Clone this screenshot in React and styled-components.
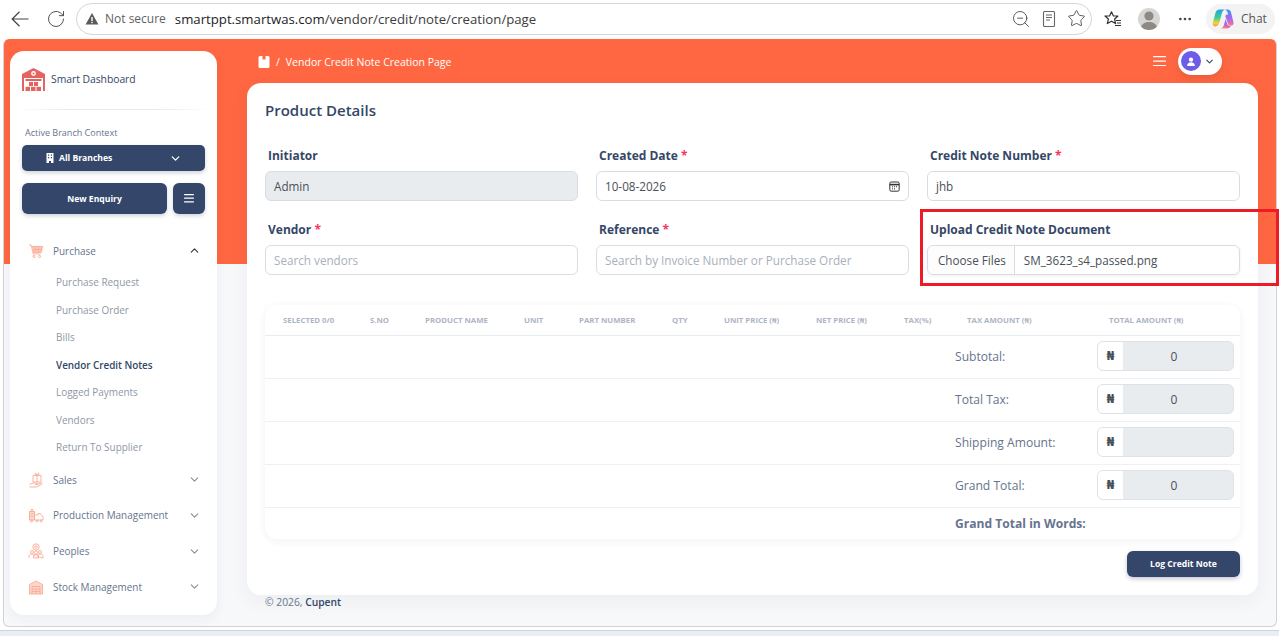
import React from 'react';
import styled, { createGlobalStyle } from 'styled-components';
import { RotateCw, ZoomOut, Star, MoreHorizontal, ChevronDown, ChevronUp } from 'lucide-react';

const Global = createGlobalStyle`
  html, body { margin: 0; padding: 0; background: #fff; }
  * { box-sizing: border-box; }
  body { font-family: "Open Sans", "Noto Sans", sans-serif; }
`;

const Root = styled.div`
  width: 1279px; height: 636px; overflow: hidden; background: #fff;
  display: flex; flex-direction: column;
`;
const Toolbar = styled.header`
  height: 39px; flex: none; background: #fff; display: flex; align-items: center; padding: 0 0 2px 11px; color: #444;
`;
const ToolBtn = styled.span`
  display: inline-flex; align-items: center; justify-content: center; flex: none; color: #444; margin-left: ${p => p.$ml || 0}px;
`;
const Address = styled.div`
  width: 1016px; height: 32px; margin: 0 0 0 10px; border: 1px solid #d5d5d5; border-radius: 16px;
  display: flex; align-items: center; padding: 0 5px 0 8px; background: #fff;
`;
const NotSecure = styled.span`
  font-size: 12px; font-weight: 500; color: #5f5f5f; margin: 0 9px 0 6px; white-space: nowrap;
`;
const Url = styled.span`
  font-size: 13.2px; color: #3c3c3c; flex: 1; white-space: nowrap;
  b { font-weight: 400; color: #1d1d1d; }
`;
const Avatar = styled.span`
  width: 22px; height: 22px; border-radius: 50%; background: #d8d6d3; margin-left: 16px; flex: none;
  display: inline-flex; align-items: center; justify-content: center; overflow: hidden;
`;
const ChatPill = styled.span`
  margin-left: 13px; width: 69px; height: 30px; background: #f3f3f3; border-radius: 15px; flex: none;
  display: inline-flex; align-items: center; padding-left: 6px; gap: 7px; font-size: 12px; color: #555;
`;

const Window = styled.div`
  height: 588px; flex: none; margin: 0 2px 0 3px; display: flex; align-items: flex-start;
  border: 1px solid #d3d3d3; border-top: 0; border-radius: 6px;
  background: linear-gradient(#ff6742 0, #ff6742 225px, #f7f8fa 225px);
  padding: 12px 0 0 6px;
`;
const StatusStrip = styled.div`
  flex: 1; margin-top: 3px; border-top: 1px solid #cfd3d8; background: #e9eef5;
`;

const Sidebar = styled.aside`
  width: 207px; height: 564px; flex: none; background: #fff; border-radius: 14px; padding: 17px 12px 0;
  box-shadow: 0 4px 12px rgba(20,30,60,.05);
`;
const Brand = styled.div`
  display: flex; align-items: center; gap: 6px; height: 23px; color: #344767; font-size: 10.4px; font-weight: 500;
  span { margin-top: -2px; letter-spacing: -.05px; }
`;
const Divider = styled.div`
  height: 1px; margin: 18px -6px 0; background: linear-gradient(90deg, transparent, #e6e8ec 30%, #e6e8ec 70%, transparent);
`;
const Context = styled.div`
  margin: 18px 0 0 3px; font-size: 9px; line-height: 10px; font-weight: 500; color: #67748e;
`;
const BranchSelect = styled.div`
  margin-top: 7px; height: 26px; border-radius: 5px; background: #34466a; color: #fff; font-size: 8.6px; font-weight: 700;
  display: flex; align-items: center; padding: 0 23px 0 24px; box-shadow: 0 2px 4px rgba(30,40,70,.2);
  span { margin-left: 5px; flex: 1; }
`;
const ActionRow = styled.div`
  margin-top: 12px; display: flex; gap: 6px;
`;
const DarkBtn = styled.button`
  height: 31px; width: ${p => p.$w}px; flex: none; border: 0; border-radius: 6px; background: #34466a; color: #fff;
  font: 700 8.6px "Open Sans", sans-serif; display: flex; align-items: center; justify-content: center; padding: 0;
  box-shadow: 0 2px 4px rgba(30,40,70,.2);
`;
const Nav = styled.nav`
  margin-top: 19px;
`;
const NavItem = styled.div`
  height: 35.6px; display: flex; align-items: center; padding: 0 4px 0 6px; color: #67748e; font-size: 9.95px;
  span { margin-left: 9px; flex: 1; white-space: nowrap; }
  & > svg:first-child { color: #f8ab95; flex: none; }
  & > svg:last-child { color: ${p => p.$open ? '#333' : '#8a8f99'}; flex: none; }
`;
const SubList = styled.div`
  margin-bottom: 1px;
`;
const SubItem = styled.div`
  height: 27.5px; display: flex; align-items: center; padding-left: 34px; font-size: 9.95px; white-space: nowrap;
  color: ${p => p.$active ? '#344767' : '#8f97a6'}; font-weight: ${p => p.$active ? 600 : 400};
  letter-spacing: ${p => p.$active ? '-.05px' : 0};
`;

const MainCol = styled.main`
  width: 1011px; margin-left: 30px; flex: none; margin-top: -12px;
`;
const TopBar = styled.div`
  height: 44px; display: flex; align-items: center; padding: 0 36px 0 11px; color: #fff; font-size: 10.5px;
`;
const Crumb = styled.div`
  flex: 1; display: flex; align-items: center; gap: 6px; padding-top: 1px; font-size: 10.5px; font-weight: 500;
`;
const UserPill = styled.div`
  margin-left: 12px; width: 44px; height: 27px; background: #fff; border-radius: 14px; display: flex; align-items: center; padding-left: 3px; gap: 3px; color: #344767;
  box-shadow: 0 3px 8px rgba(0,0,0,.1);
`;
const UserDot = styled.span`
  width: 20px; height: 20px; border-radius: 50%; background: #6c5ce7; display: inline-flex; align-items: center; justify-content: center;
`;
const Card = styled.section`
  height: 512px; background: #fff; border-radius: 14px; padding: 15px 18px 0;
  box-shadow: 0 6px 20px rgba(20,30,60,.05);
`;
const Title = styled.h2`
  margin: 0; font-size: 15px; line-height: 24px; font-weight: 600; color: #344767;
`;
const FormGrid = styled.div`
  margin-top: 26px; display: grid; grid-template-columns: repeat(3, 313px); column-gap: 18px; row-gap: 21px;
`;
const Field = styled.div`
  position: relative;
`;
const Label = styled.label`
  display: block; padding-left: 3px; font-size: 12px; line-height: 16px; font-weight: 700; color: #344767; margin-bottom: 7px;
  em { color: #f5365c; font-style: normal; }
`;
const Input = styled.div`
  height: 30px; border: 1px solid #d9dde3; border-radius: 6px; display: flex; align-items: center; padding: 0 8px;
  font-size: 11.7px; background: ${p => p.$disabled ? '#e9ecef' : '#fff'};
  color: ${p => p.$placeholder ? '#a9b0bb' : '#495057'};
  justify-content: space-between;
`;
const FileInput = styled.div`
  height: 30px; border: 1px solid #d9dde3; border-radius: 6px; display: flex; align-items: center; font-size: 11.7px; color: #495057;
  box-shadow: 0 1px 3px rgba(30,40,70,.08);
`;
const FileBtn = styled.span`
  height: 100%; padding: 0 8px 0 10px; display: flex; align-items: center; background: #fdfdfe; border-right: 1px solid #d9dde3; border-radius: 6px 0 0 6px;
`;
const FileName = styled.span`
  padding-left: 9px;
`;
const Highlight = styled.div`
  position: absolute; left: -7px; top: -13px; width: 359px; height: 77px; border: 3px solid #ed1c24; pointer-events: none;
`;
const Table = styled.div`
  margin-top: 30px; height: 234px; border-radius: 12px; background: #fff;
  box-shadow: 0 2px 10px rgba(20,30,60,.06);
`;
const HeadRow = styled.div`
  height: 31px; display: grid; grid-template-columns: 87px 55px 99px 55px 93px 52px 92px 88px 63px 142px 1fr;
  padding-left: 18px; align-items: center; border-bottom: 1px solid #e9ecef; color: #aeb5c4; font-size: 7.8px; font-weight: 700; white-space: nowrap;
`;
const TotalRow = styled.div`
  height: ${p => p.$h || 43}px; display: flex; align-items: center; padding: 0 0 ${p => p.$last ? 0 : 2}px 690px; color: #67748e; font-size: 12.1px;
  border-bottom: ${p => p.$last ? 0 : '1px solid #eef0f3'}; font-weight: ${p => p.$bold ? 700 : 400};
  span:first-child { width: 142px; }
`;
const Money = styled.div`
  width: 137px; height: 30px; border: 1px solid #dfe2e7; border-radius: 6px; display: flex; overflow: hidden; font-size: 12px; color: #495057; background: #e9ecef;
`;
const Currency = styled.div`
  width: 25px; background: #fff; display: flex; align-items: center; justify-content: center; font-family: "DejaVu Sans", sans-serif; font-size: 11.5px; font-weight: 700; color: #495057;
`;
const MoneyValue = styled.div`
  flex: 1; display: flex; align-items: center; justify-content: center; padding-right: 8px;
`;
const Actions = styled.div`
  margin-top: 12px; display: flex; justify-content: flex-end;
`;
const Submit = styled.button`
  width: 113px; height: 26px; border: 0; border-radius: 6px; background: #34466a; color: #fff; font: 700 8.6px "Open Sans", sans-serif; padding: 0;
  box-shadow: 0 2px 4px rgba(30,40,70,.25);
`;
const Footer = styled.div`
  height: 20px; padding-left: 18px; line-height: 14px; font-size: 10.3px; color: #67748e;
  b { color: #344767; font-weight: 600; }
`;

const Back = () => (
  <svg width="18" height="18" viewBox="0 0 18 18" fill="none" stroke="#444" strokeWidth="1.2"><path d="M17.5 9H1.2M8.5 1.8 1.2 9l7.3 7.2"/></svg>
);
const Warn = () => (
  <svg width="14" height="14" viewBox="0 0 14 14"><path d="M7 1 13.4 12.6H.6Z" fill="#5a5a5a"/><rect x="6.3" y="5" width="1.4" height="4" fill="#fff"/><rect x="6.3" y="9.8" width="1.4" height="1.4" fill="#fff"/></svg>
);
const Reader = () => (
  <svg width="16" height="18" viewBox="0 0 16 18" fill="none" stroke="#666" strokeWidth="1.1"><rect x="2.5" y="1.5" width="11" height="15" rx="1"/><path d="M5 5h6M5 7.5h6M5 10h4"/></svg>
);
const Favs = () => (
  <svg width="18" height="18" viewBox="0 0 18 18" fill="none" stroke="#333" strokeWidth="1.2"><path d="M7.5 1.8 9.4 6H14l-3.4 3 1 4.6-4.1-2.4-4.2 2.4 1.1-4.6L1 6h4.6Z" strokeLinejoin="round"/><path d="M12 10.5h5M13 13h4M11 15.5h6" /></svg>
);
const Person = ({ size = 22, color = '#8d8a85' }) => (
  <svg width={size} height={size} viewBox="0 0 22 22" fill={color}><circle cx="11" cy="8" r="4.6"/><path d="M2.5 22c0-5.5 3.8-8 8.5-8s8.5 2.5 8.5 8Z"/></svg>
);
const Copilot = () => (
  <svg width="22" height="22" viewBox="0 0 22 22">
    <defs>
      <linearGradient id="cpa" x1=".4" y1="0" x2=".4" y2="1"><stop offset="0" stopColor="#1fa4f0"/><stop offset=".5" stopColor="#3fd08a"/><stop offset=".8" stopColor="#f7d23e"/><stop offset="1" stopColor="#f6913c"/></linearGradient>
      <linearGradient id="cpb" x1=".6" y1="0" x2=".4" y2="1"><stop offset="0" stopColor="#2f9af2"/><stop offset=".5" stopColor="#9a6cf5"/><stop offset=".85" stopColor="#f26aa8"/><stop offset="1" stopColor="#f7a04a"/></linearGradient>
    </defs>
    <path d="M7.500 1.500h5.500c-1.800.6-2.700 2-3.200 4L7.500 14c-.6 2.600-2.200 4.400-4.300 4.400C1.300 18.400.3 16.800.8 14.800L3.500 4.800C4 2.800 5.400 1.500 7.500 1.500Z" fill="url(#cpa)"/>
    <path d="M13 1.500h2.500c1.800 0 3 1 3.500 2.800l2.400 9.700c.5 2.200-.6 3.800-2.600 3.800-1.600 0-2.500-.8-3-2.500L13.500 9c-.3-1.300.4-2.300 1.700-2.500l1-.1c-.4-2.200-1.400-4.100-3.200-4.900Z" fill="url(#cpb)"/>
    <path d="M7.500 20.500h7c2.400 0 3.800-1.200 4.500-3-.8.500-2.600.4-3.300-.7-.8-1.200-1.300-3.300-2-5.800l-2 6.400c-.7 2-2 3.200-4.200 3.100Z" fill="url(#cpb)"/>
  </svg>
);
const Logo = () => (
  <svg width="23" height="23" viewBox="0 0 23 23" fill="#e4625f">
    <path d="M11.5 0 23 6v17h-2V10H2v13H0V6Z"/>
    <circle cx="11.5" cy="5.500" r="2.400" fill="#fff"/><circle cx="11.500" cy="5.500" r="1" fill="#e4625f"/>
    <rect x="3.500" y="11" width="16" height="2" />
    <rect x="7" y="14" width="4" height="4"/><rect x="12" y="14" width="4" height="4"/>
    <rect x="3.500" y="18.800" width="4.500" height="4.200"/><rect x="9" y="18.800" width="4.500" height="4.200"/><rect x="14.500" y="18.800" width="4.500" height="4.200"/>
  </svg>
);
const HomeCrumb = () => (
  <svg width="12" height="12" viewBox="0 0 12 12" fill="#fff"><path d="M2 0h2.500v4L6 3l1.500 1V0H10a1.500 1.500 0 0 1 1.500 1.500v9A1.500 1.500 0 0 1 10 12H2A1.500 1.500 0 0 1 .5 10.500v-9A1.500 1.500 0 0 1 2 0Z"/></svg>
);
const Calendar = () => (
  <svg width="11" height="11" viewBox="0 0 11 11" fill="none" stroke="#333"><rect x=".8" y="1" width="9.400" height="9.200" rx="1.400"/><path d="M.8 3.600h9.400" strokeWidth="1.600"/><path d="M3 5.800h1M5 5.800h1M7 5.800h1M3 7.900h1M5 7.900h1" /></svg>
);
const Bars = ({ w = 13, gap = 4.500, h = 1.300 }) => (
  <svg width={w} height={gap * 2 + h} viewBox={`0 0 ${w} ${gap * 2 + h}`} fill="currentColor">
    {[0, 1, 2].map(i => <rect key={i} y={i * gap} width={w} height={h} rx=".5" />)}
  </svg>
);
const BuildingIcon = () => (
  <svg width="8" height="10" viewBox="0 0 8 10" fill="#fff"><path d="M.5 0h7v10H5V8H3v2H.5Z"/><path d="M2 1.500h1.200v1.200H2zM4.800 1.500H6v1.200H4.800zM2 4h1.200v1.200H2zM4.800 4H6v1.200H4.800z" fill="#34466a"/></svg>
);
const NavIcon = ({ children }) => (
  <svg width="16" height="16" viewBox="0 0 16 16" fill="none" stroke="currentColor" strokeWidth=".9" strokeLinejoin="round">{children}</svg>
);
const CartIcon = () => (
  <NavIcon>
    <path d="M1 2h2.200l2 9h7.500"/><path d="M3.600 3.500h11l-1.500 6H5" fill="#fbc9b8"/><path d="M7 3.500v6M10.500 3.500v6M4.500 6.500h9.500"/><circle cx="6" cy="13.500" r="1.100"/><circle cx="11.500" cy="13.500" r="1.100"/>
  </NavIcon>
);
const SalesIcon = () => (
  <NavIcon>
    <rect x="5" y="3.500" width="8" height="6.500"/><path d="M9 3.500V10M7 3.500 7.500 1 9 3.500 10.500 1 11 3.500"/><path d="M1.500 12.500 5 11h4c1 0 1 1.500 0 1.500H7M9 12.500l4-1.500c1-.3 1.500.7.700 1.300L8.500 15h-7"/>
  </NavIcon>
);
const ProductionIcon = () => (
  <NavIcon>
    <path d="M1.500 13V4.500h5V13Z" fill="#fbd6c9"/><path d="M3 4.500V2.500h2v2M3 7h2M3 9.500h2"/><path d="M6.500 8h3.500V6.500h2.500L15 10v3H6.500Z"/><circle cx="9" cy="14" r="1"/><circle cx="13" cy="14" r="1"/><circle cx="3.500" cy="14" r="1"/>
  </NavIcon>
);
const PeoplesIcon = () => (
  <NavIcon>
    <circle cx="8" cy="4" r="3.200"/><circle cx="8" cy="4" r="1.300"/><circle cx="4" cy="9" r="1.500"/><circle cx="12" cy="9" r="1.500"/><circle cx="8" cy="9.500" r="1.500"/><path d="M1 15v-1.500c0-1.500 1-2.500 3-2.500s3 1 3 2.500M9 13.500c0-1.500 1-2.500 3-2.500s3 1 3 2.500V15ZM5.500 15v-2c0-1 1-1.500 2.500-1.500s2.500.5 2.500 1.500v2Z"/>
  </NavIcon>
);
const StockIcon = () => (
  <NavIcon>
    <path d="M1.500 15V5.500L8 2l6.500 3.500V15Z" fill="#fbd6c9"/><path d="M4 15V7.500h8V15M4 10h8M4 12.500h8M8 10v5"/>
  </NavIcon>
);

const subs = ['Purchase Request', 'Purchase Order', 'Bills', 'Vendor Credit Notes', 'Logged Payments', 'Vendors', 'Return To Supplier'];
const heads = ['SELECTED 0/0', 'S.NO', 'PRODUCT NAME', 'UNIT', 'PART NUMBER', 'QTY', 'UNIT PRICE (₦)', 'NET PRICE (₦)', 'TAX(%)', 'TAX AMOUNT (₦)', 'TOTAL AMOUNT (₦)'];

const MoneyField = ({ value }) => (
  <Money><Currency>₦</Currency><MoneyValue>{value}</MoneyValue></Money>
);

export default function App() {
  return (
    <Root>
      <Global />
      <Toolbar>
        <ToolBtn><Back /></ToolBtn>
        <ToolBtn $ml={17}><RotateCw size={20} strokeWidth={1.100} /></ToolBtn>
        <Address>
          <Warn />
          <NotSecure>Not secure</NotSecure>
          <Url><b>smartppt.smartwas.com</b>/vendor/credit/note/creation/page</Url>
          <ToolBtn><ZoomOut size={20} strokeWidth={1.050} /></ToolBtn>
          <ToolBtn $ml={10}><Reader /></ToolBtn>
          <ToolBtn $ml={10}><Star size={19} strokeWidth={1.100} /></ToolBtn>
        </Address>
        <ToolBtn $ml={12}><Favs /></ToolBtn>
        <Avatar><Person /></Avatar>
        <ToolBtn $ml={17}><MoreHorizontal size={16} strokeWidth={2} /></ToolBtn>
        <ChatPill><Copilot />Chat</ChatPill>
      </Toolbar>
      <Window>
        <Sidebar>
          <Brand><Logo /><span>Smart Dashboard</span></Brand>
          <Divider />
          <Context>Active Branch Context</Context>
          <BranchSelect><BuildingIcon /><span>All Branches</span><ChevronDown size={13} strokeWidth={2.400} /></BranchSelect>
          <ActionRow>
            <DarkBtn $w={145}>New Enquiry</DarkBtn>
            <DarkBtn $w={32}><Bars w={10} gap={3.600} h={1.200} /></DarkBtn>
          </ActionRow>
          <Nav>
            <NavItem $open><CartIcon /><span>Purchase</span><ChevronUp size={13} /></NavItem>
            <SubList>
              {subs.map(s => <SubItem key={s} $active={s === 'Vendor Credit Notes'}>{s}</SubItem>)}
            </SubList>
            <NavItem><SalesIcon /><span>Sales</span><ChevronDown size={13} /></NavItem>
            <NavItem><ProductionIcon /><span>Production Management</span><ChevronDown size={13} /></NavItem>
            <NavItem><PeoplesIcon /><span>Peoples</span><ChevronDown size={13} /></NavItem>
            <NavItem><StockIcon /><span>Stock Management</span><ChevronDown size={13} /></NavItem>
          </Nav>
        </Sidebar>
        <MainCol>
          <TopBar>
            <Crumb><HomeCrumb /> / <span>Vendor Credit Note Creation Page</span></Crumb>
            <Bars />
            <UserPill><UserDot><Person size={10} color="#fff" /></UserDot><ChevronDown size={11} strokeWidth={2.400} /></UserPill>
          </TopBar>
          <Card>
            <Title>Product Details</Title>
            <FormGrid>
              <Field><Label>Initiator</Label><Input $disabled>Admin</Input></Field>
              <Field><Label>Created Date <em>*</em></Label><Input>10-08-2026<Calendar /></Input></Field>
              <Field><Label>Credit Note Number <em>*</em></Label><Input>jhb</Input></Field>
              <Field><Label>Vendor <em>*</em></Label><Input $placeholder>Search vendors</Input></Field>
              <Field><Label>Reference <em>*</em></Label><Input $placeholder>Search by Invoice Number or Purchase Order</Input></Field>
              <Field>
                <Label>Upload Credit Note Document</Label>
                <FileInput><FileBtn>Choose Files</FileBtn><FileName>SM_3623_s4_passed.png</FileName></FileInput>
                <Highlight />
              </Field>
            </FormGrid>
            <Table>
              <HeadRow>{heads.map(h => <span key={h}>{h}</span>)}</HeadRow>
              <TotalRow><span>Subtotal:</span><MoneyField value="0" /></TotalRow>
              <TotalRow><span>Total Tax:</span><MoneyField value="0" /></TotalRow>
              <TotalRow><span>Shipping Amount:</span><MoneyField value="" /></TotalRow>
              <TotalRow><span>Grand Total:</span><MoneyField value="0" /></TotalRow>
              <TotalRow $h={31} $last $bold><span>Grand Total in Words:</span></TotalRow>
            </Table>
            <Actions><Submit>Log Credit Note</Submit></Actions>
          </Card>
          <Footer>© 2026, <b>Cupent</b></Footer>
        </MainCol>
      </Window>
      <StatusStrip />
    </Root>
  );
}
